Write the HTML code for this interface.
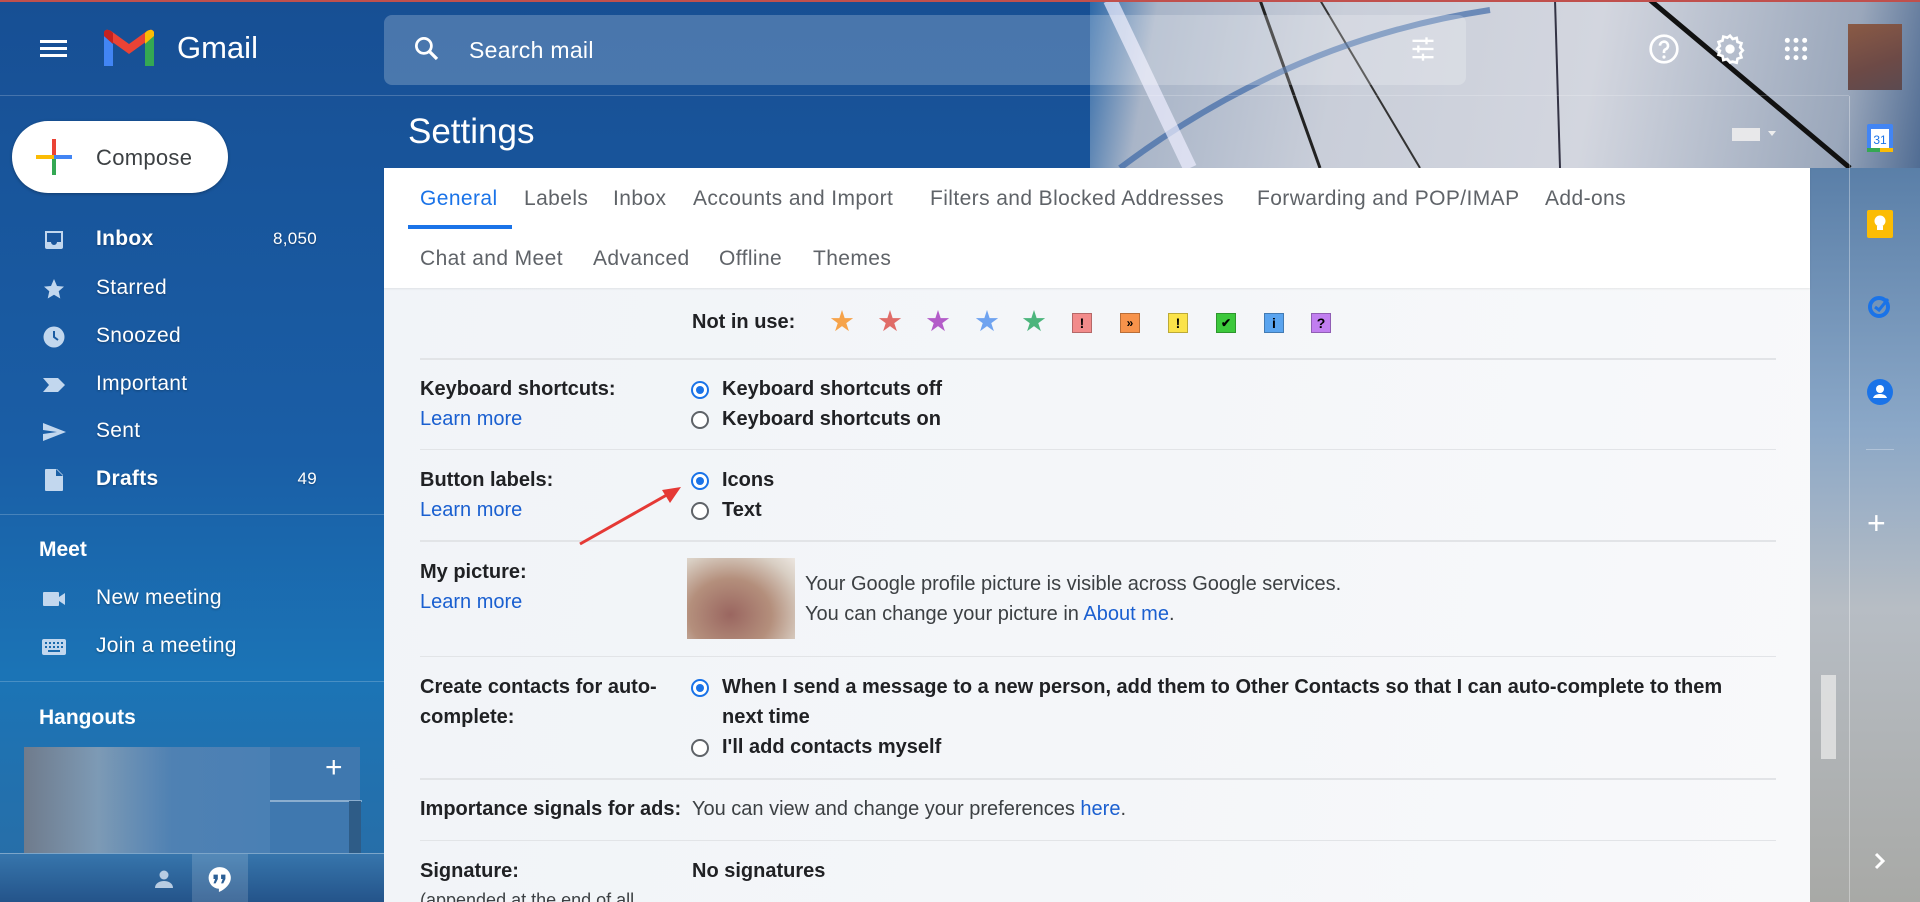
<!DOCTYPE html>
<html><head><meta charset="utf-8"><style>
*{margin:0;padding:0;box-sizing:border-box}
html,body{width:1920px;height:902px;overflow:hidden}
body{position:relative;font-family:"Liberation Sans",Arial,sans-serif;background:#1a5aa0}
.abs{position:absolute}
#bg{left:0;top:0;width:1920px;height:902px;background:linear-gradient(180deg,#174f94 0%,#1a5ea6 50%,#1b74b6 75%,#2a6da5 100%)}
#photo{left:1090px;top:0;width:830px;height:168px;background:linear-gradient(100deg,#2d68a8 0%,#a9b5c8 8%,#c9ced9 30%,#d3d6df 60%,#9aa7bb 90%,#506c93 100%)}
#rside{left:1810px;top:168px;width:110px;height:734px;background:linear-gradient(180deg,#5a7fa8 0%,#8aa7c7 35%,#b7bdc4 60%,#a8a9a6 100%)}
.nav{left:0;width:384px;height:48px;color:#fff;font-size:21px;letter-spacing:.3px;text-shadow:0 1px 2px rgba(0,0,0,.3)}
.nav .ic{position:absolute;left:42px;top:12px;width:24px;height:24px}
.nav .t{position:absolute;left:96px;top:11px}
.nav .c{position:absolute;right:67px;top:13px;font-size:17px}
.tab{position:absolute;font-size:21px;letter-spacing:.4px;color:#5f6368}
.lbl{position:absolute;left:420px;font-size:20px;font-weight:bold;color:#202124}
.lnk{position:absolute;left:420px;font-size:20px;color:#1a5fd0}
.val{position:absolute;left:722px;font-size:20px;font-weight:bold;color:#202124}
.rad{position:absolute;left:691px;width:18px;height:18px;border-radius:50%;border:2px solid #5f6368;background:#fff}
.rad.on{border-color:#1a73e8}
.rad.on:after{content:"";position:absolute;left:3px;top:3px;width:8px;height:8px;border-radius:50%;background:#1a73e8}
.hr{position:absolute;left:420px;width:1356px;height:2px;background:#e2e4e7}
.txt{position:absolute;font-size:20px;color:#3c4043}
.box{position:absolute;top:313px;width:20px;height:20px;font-size:14px;font-weight:bold;text-align:center;line-height:18px;color:#000;border:1px solid rgba(0,0,0,.25)}
.star{position:absolute;top:308px;font-size:29px;line-height:29px}
</style></head><body>
<div id="bg" class="abs"></div>
<div id="photo" class="abs"></div>
<svg class="abs" style="left:1090px;top:0" width="830" height="168">
<line x1="170" y1="0" x2="230" y2="168" stroke="#222" stroke-width="3"/>
<line x1="560" y1="0" x2="760" y2="168" stroke="#111" stroke-width="5"/>
<line x1="230" y1="0" x2="330" y2="168" stroke="#333" stroke-width="2"/>
<path d="M30 168 Q200 40 400 10" stroke="#2a5aa0" stroke-width="6" fill="none" opacity=".6"/>
<line x1="465" y1="0" x2="470" y2="168" stroke="#334" stroke-width="2"/>
<line x1="20" y1="0" x2="100" y2="168" stroke="#eef" stroke-width="14" opacity=".7"/>
</svg>
<div id="rside" class="abs"></div>
<div class="abs" style="left:1849px;top:96px;width:1px;height:806px;background:rgba(255,255,255,.35)"></div>
<div class="abs" style="left:0;top:0;width:1920px;height:2px;background:#c0504d"></div>
<div class="abs" style="left:0;top:95px;width:1849px;height:1px;background:rgba(255,255,255,.2)"></div>

<svg class="abs" style="left:40px;top:39px" width="28" height="20"><rect y="1" width="27" height="3" fill="#fff"/><rect y="8" width="27" height="3" fill="#fff"/><rect y="15" width="27" height="3" fill="#fff"/></svg>
<svg class="abs" style="left:102px;top:28px" width="54" height="40" viewBox="0 0 54 40">
<path d="M2 8 V38 H11 V16 Z" fill="#4285f4"/><path d="M43 16 V38 H52 V8 Z" fill="#34a853"/>
<path d="M2 8 L27 26 L52 8 L52 4 Q50 0 45 3 L27 16 L9 3 Q4 0 2 4 Z" fill="#ea4335"/>
<path d="M43 16 L52 8 V4 Q50 0 45 3 L43 5Z" fill="#fbbc04"/><path d="M2 8 L11 16 V5 L9 3 Q4 0 2 4Z" fill="#c5221f"/>
</svg>
<div class="abs" style="left:177px;top:30px;font-size:31px;color:#fff">Gmail</div>
<div class="abs" style="left:384px;top:15px;width:1082px;height:70px;border-radius:8px;background:rgba(255,255,255,.22)"></div>
<svg class="abs" style="left:412px;top:34px" width="30" height="30" viewBox="0 0 24 24"><circle cx="9.5" cy="9.5" r="6" stroke="#fff" stroke-width="2.2" fill="none"/><line x1="14" y1="14" x2="20" y2="20" stroke="#fff" stroke-width="2.6"/></svg>
<div class="abs" style="left:469px;top:37px;font-size:23px;letter-spacing:.3px;color:#fff">Search mail</div>
<svg class="abs" style="left:1409px;top:35px" width="28" height="28" viewBox="0 0 24 24" fill="#fff"><rect x="3" y="4" width="18" height="2"/><rect x="3" y="11" width="18" height="2"/><rect x="3" y="18" width="18" height="2"/><rect x="14" y="2" width="2" height="6"/><rect x="7" y="9" width="2" height="6"/><rect x="11" y="16" width="2" height="6"/></svg>
<svg class="abs" style="left:1648px;top:33px" width="32" height="32" viewBox="0 0 24 24"><circle cx="12" cy="12" r="10" stroke="#fff" stroke-width="2" fill="none"/><path d="M9 9.5a3 3 0 1 1 4 2.8c-.8.4-1 1-1 1.7V15" stroke="#fff" stroke-width="2" fill="none"/><circle cx="12" cy="18" r="1.2" fill="#fff"/></svg>
<svg class="abs" style="left:1714px;top:33px" width="32" height="32" viewBox="0 0 24 24"><path d="M12 2l2 2.5 3-.8.6 3 3 1-1 3 2 2.3-2 2.3 1 3-3 1-.6 3-3-.8L12 22l-2-2.5-3 .8-.6-3-3-1 1-3L2.4 12l2-2.3-1-3 3-1 .6-3 3 .8z" stroke="#fff" stroke-width="2" fill="none"/><circle cx="12" cy="12" r="3.5" fill="#fff"/></svg>
<svg class="abs" style="left:1783px;top:36px" width="26" height="26" viewBox="0 0 24 24" fill="#fff"><circle cx="4" cy="4" r="2.3"/><circle cx="12" cy="4" r="2.3"/><circle cx="20" cy="4" r="2.3"/><circle cx="4" cy="12" r="2.3"/><circle cx="12" cy="12" r="2.3"/><circle cx="20" cy="12" r="2.3"/><circle cx="4" cy="20" r="2.3"/><circle cx="12" cy="20" r="2.3"/><circle cx="20" cy="20" r="2.3"/></svg>
<div class="abs" style="left:1848px;top:24px;width:54px;height:66px;background:linear-gradient(160deg,#8a5a45,#6d4a46 60%,#5b4a50)"></div>

<div class="abs" style="left:12px;top:121px;width:216px;height:72px;border-radius:36px;background:#fff;box-shadow:0 1px 3px rgba(0,0,0,.3)"></div>
<svg class="abs" style="left:36px;top:139px" width="36" height="36" viewBox="0 0 36 36"><rect x="16" y="0" width="4" height="18" fill="#ea4335"/><rect x="16" y="18" width="4" height="18" fill="#34a853"/><rect x="0" y="16" width="18" height="4" fill="#fbbc04"/><rect x="18" y="16" width="18" height="4" fill="#4285f4"/></svg>
<div class="abs" style="left:96px;top:145px;font-size:22px;letter-spacing:.3px;color:#3c4043">Compose</div>

<div class="abs nav" style="top:216px"><svg class="ic" viewBox="0 0 24 24"><path d="M3 3h18v16a2 2 0 0 1-2 2H5a2 2 0 0 1-2-2z" fill="#c2d7ee"/><path d="M5 5h14v9h-4a3 3 0 0 1-6 0H5z" fill="#1a569c"/></svg><span class="t" style="font-weight:bold">Inbox</span><span class="c">8,050</span></div>
<div class="abs nav" style="top:265px"><svg class="ic" viewBox="0 0 24 24"><path d="M12 2l3 7 7 .6-5.3 4.7 1.6 7.2L12 17.8 5.7 21.5l1.6-7.2L2 9.6 9 9z" fill="#c2d7ee"/></svg><span class="t">Starred</span></div>
<div class="abs nav" style="top:313px"><svg class="ic" viewBox="0 0 24 24"><circle cx="12" cy="12" r="10.5" fill="#c2d7ee"/><path d="M12 6v6l4 3" stroke="#1a5ba2" stroke-width="2" fill="none"/></svg><span class="t">Snoozed</span></div>
<div class="abs nav" style="top:361px"><svg class="ic" viewBox="0 0 24 24"><path d="M1 5h15l7 7-7 7H1l6-7z" fill="#c2d7ee"/></svg><span class="t">Important</span></div>
<div class="abs nav" style="top:408px"><svg class="ic" viewBox="0 0 24 24"><path d="M1 3l23 9L1 21v-7l14-2-14-2z" fill="#c2d7ee"/></svg><span class="t">Sent</span></div>
<div class="abs nav" style="top:456px"><svg class="ic" viewBox="0 0 24 24"><path d="M4 1h11l6 6v15a1 1 0 0 1-1 1H4a1 1 0 0 1-1-1V2a1 1 0 0 1 1-1z" fill="#c2d7ee"/><path d="M14 1v7h7" fill="#1a5fa5"/></svg><span class="t" style="font-weight:bold">Drafts</span><span class="c">49</span></div>
<div class="abs" style="left:0;top:514px;width:384px;height:1px;background:rgba(255,255,255,.2)"></div>
<div class="abs" style="left:39px;top:538px;font-size:21px;font-weight:bold;color:#fff">Meet</div>
<div class="abs nav" style="top:575px"><svg class="ic" viewBox="0 0 24 24"><rect x="1" y="5" width="16" height="14" rx="1" fill="#c2d7ee"/><path d="M17 10l6-4v12l-6-4z" fill="#c2d7ee"/></svg><span class="t">New meeting</span></div>
<div class="abs nav" style="top:623px"><svg class="ic" viewBox="0 0 24 24"><rect x="0" y="4" width="24" height="16" rx="2" fill="#c2d7ee"/><g fill="#1a6aad"><rect x="3" y="7" width="2" height="2"/><rect x="7" y="7" width="2" height="2"/><rect x="11" y="7" width="2" height="2"/><rect x="15" y="7" width="2" height="2"/><rect x="19" y="7" width="2" height="2"/><rect x="3" y="11" width="2" height="2"/><rect x="7" y="11" width="2" height="2"/><rect x="11" y="11" width="2" height="2"/><rect x="15" y="11" width="2" height="2"/><rect x="19" y="11" width="2" height="2"/><rect x="6" y="15" width="12" height="2"/></g></svg><span class="t">Join a meeting</span></div>
<div class="abs" style="left:0;top:681px;width:384px;height:1px;background:rgba(255,255,255,.2)"></div>
<div class="abs" style="left:39px;top:706px;font-size:21px;font-weight:bold;color:#fff">Hangouts</div>
<div class="abs" style="left:24px;top:747px;width:246px;height:106px;background:linear-gradient(90deg,#6f7b8c,#7d9ab5 30%,#4f81b3 60%,#4a80b4)"></div>
<div class="abs" style="left:270px;top:747px;width:90px;height:106px;background:#3f78af"></div>
<div class="abs" style="left:270px;top:800px;width:92px;height:2px;background:rgba(255,255,255,.4)"></div>
<div class="abs" style="left:349px;top:801px;width:12px;height:52px;background:#2e5c87"></div>
<div class="abs" style="left:325px;top:751px;font-size:30px;color:#fff">+</div>
<div class="abs" style="left:0;top:853px;width:384px;height:49px;background:linear-gradient(180deg,#3776ad,#24548a)"></div>
<div class="abs" style="left:0;top:853px;width:384px;height:1px;background:rgba(255,255,255,.35)"></div>
<div class="abs" style="left:192px;top:854px;width:56px;height:48px;background:rgba(255,255,255,.15)"></div>
<svg class="abs" style="left:152px;top:867px" width="24" height="24" viewBox="0 0 24 24" fill="#b8cce2"><circle cx="12" cy="8" r="4.5"/><path d="M3 21c0-5 5-7 9-7s9 2 9 7z"/></svg>
<svg class="abs" style="left:207px;top:866px" width="26" height="26" viewBox="0 0 24 24"><path d="M12 1a10 10 0 0 0-1 20v3c5-2 11-7 11-13A10 10 0 0 0 12 1z" fill="#fff"/><path d="M6 8h4v4l-2 4H6l1.5-4H6zM13 8h4v4l-2 4h-2l1.5-4H13z" fill="#2b5f96"/></svg>

<div class="abs" style="left:408px;top:112px;font-size:35px;color:#fff">Settings</div>
<svg class="abs" style="left:1730px;top:126px" width="50" height="16"><rect x="2" y="2" width="28" height="13" fill="#e8e8ea"/><path d="M38 5h8l-4 5z" fill="#eee"/></svg>
<div class="abs" style="left:384px;top:168px;width:1426px;height:734px;background:linear-gradient(100deg,#f1f4f8 0%,#f4f6f9 50%,#f8f9fa 100%)"></div>
<div class="abs" style="left:384px;top:168px;width:1426px;height:120px;background:#fff;box-shadow:0 1px 2px rgba(0,0,0,.08)"></div>
<div class="tab" style="left:420px;top:187px;color:#1a73e8">General</div>
<div class="abs" style="left:408px;top:225px;width:104px;height:4px;background:#1a73e8"></div>
<div class="tab" style="left:524px;top:187px">Labels</div>
<div class="tab" style="left:613px;top:187px">Inbox</div>
<div class="tab" style="left:693px;top:187px">Accounts and Import</div>
<div class="tab" style="left:930px;top:187px">Filters and Blocked Addresses</div>
<div class="tab" style="left:1257px;top:187px">Forwarding and POP/IMAP</div>
<div class="tab" style="left:1545px;top:187px">Add-ons</div>
<div class="tab" style="left:420px;top:247px">Chat and Meet</div>
<div class="tab" style="left:593px;top:247px">Advanced</div>
<div class="tab" style="left:719px;top:247px">Offline</div>
<div class="tab" style="left:813px;top:247px">Themes</div>

<div class="lbl" style="left:692px;top:311px">Not in use:</div>
<span class="star" style="left:829px;color:#f6a34a">★</span>
<span class="star" style="left:877px;color:#e06c68">★</span>
<span class="star" style="left:925px;color:#b35cc9">★</span>
<span class="star" style="left:974px;color:#6fa3f0">★</span>
<span class="star" style="left:1021px;color:#4bb57c">★</span>
<div class="box" style="left:1072px;background:#f28b8b">!</div>
<div class="box" style="left:1120px;background:#f7934b;font-size:12px">»</div>
<div class="box" style="left:1168px;background:#fbe34a">!</div>
<div class="box" style="left:1216px;background:#3cc83c;font-size:12px">✔</div>
<div class="box" style="left:1264px;background:#5aa4ef">i</div>
<div class="box" style="left:1311px;background:#c17ef0">?</div>
<div class="hr" style="top:358px"></div>

<div class="lbl" style="top:378px">Keyboard shortcuts:</div>
<div class="lnk" style="top:408px">Learn more</div>
<div class="rad on" style="top:381px"></div><div class="val" style="top:378px">Keyboard shortcuts off</div>
<div class="rad" style="top:411px"></div><div class="val" style="top:408px">Keyboard shortcuts on</div>
<div class="hr" style="top:449px;height:1px"></div>

<div class="lbl" style="top:469px">Button labels:</div>
<div class="lnk" style="top:499px">Learn more</div>
<div class="rad on" style="top:472px"></div><div class="val" style="top:469px">Icons</div>
<div class="rad" style="top:502px"></div><div class="val" style="top:499px">Text</div>
<div class="hr" style="top:540px"></div>
<svg class="abs" style="left:570px;top:480px" width="120" height="70"><line x1="10" y1="64" x2="102" y2="12" stroke="#e53935" stroke-width="3"/><path d="M111 7 L92 10 L100 23 Z" fill="#e53935"/></svg>

<div class="lbl" style="top:561px">My picture:</div>
<div class="lnk" style="top:591px">Learn more</div>
<div class="abs" style="left:687px;top:558px;width:108px;height:81px;background:radial-gradient(ellipse at 40% 70%,#9a6660,#b48f7c 45%,#d9cfc4 80%,#ece6e0)"></div>
<div class="txt" style="left:805px;top:573px">Your Google profile picture is visible across Google services.</div>
<div class="txt" style="left:805px;top:603px">You can change your picture in <span style="color:#1a5fd0">About me</span>.</div>
<div class="hr" style="top:656px;height:1px"></div>

<div class="lbl" style="top:676px">Create contacts for auto-</div>
<div class="lbl" style="top:706px">complete:</div>
<div class="rad on" style="top:679px"></div><div class="val" style="top:676px">When I send a message to a new person, add them to Other Contacts so that I can auto-complete to them</div>
<div class="val" style="top:706px">next time</div>
<div class="rad" style="top:739px"></div><div class="val" style="top:736px">I'll add contacts myself</div>
<div class="hr" style="top:778px"></div>

<div class="lbl" style="top:798px">Importance signals for ads:</div>
<div class="txt" style="left:692px;top:798px">You can view and change your preferences <span style="color:#1a5fd0">here</span>.</div>
<div class="hr" style="top:840px;height:1px"></div>

<div class="lbl" style="top:860px">Signature:</div>
<div class="txt" style="left:420px;top:890px;font-size:18px">(appended at the end of all</div>
<div class="val" style="left:692px;top:860px">No signatures</div>

<div class="abs" style="left:1821px;top:675px;width:15px;height:84px;background:rgba(230,230,230,.8)"></div>

<svg class="abs" style="left:1866px;top:123px" width="28" height="30" viewBox="0 0 28 30"><rect x="1" y="1" width="26" height="28" rx="2" fill="#4285f4"/><rect x="5" y="6" width="18" height="19" fill="#fff"/><text x="14" y="21" font-size="12" text-anchor="middle" fill="#1a73e8" font-family="Liberation Sans">31</text><rect x="1" y="25" width="13" height="4" fill="#34a853"/><rect x="14" y="25" width="13" height="4" fill="#fbbc04"/></svg>
<svg class="abs" style="left:1866px;top:209px" width="28" height="30" viewBox="0 0 28 30"><rect x="1" y="1" width="26" height="28" rx="2" fill="#fbbc04"/><circle cx="14" cy="12" r="5.5" fill="#fff"/><rect x="11" y="17" width="6" height="4" fill="#fff"/></svg>
<svg class="abs" style="left:1866px;top:292px" width="28" height="28" viewBox="0 0 28 28"><circle cx="13" cy="15" r="9" stroke="#1a73e8" stroke-width="4" fill="none"/><path d="M9 15l4 3 9-11" stroke="#1a73e8" stroke-width="3" fill="none"/></svg>
<svg class="abs" style="left:1866px;top:378px" width="28" height="28" viewBox="0 0 28 28"><circle cx="14" cy="14" r="13" fill="#1a73e8"/><circle cx="14" cy="11" r="4" fill="#fff"/><path d="M7 20c1-3 4-4 7-4s6 1 7 4z" fill="#fff"/></svg>
<div class="abs" style="left:1866px;top:449px;width:28px;height:1px;background:rgba(255,255,255,.3)"></div>
<div class="abs" style="left:1867px;top:505px;font-size:32px;color:#fff">+</div>
<svg class="abs" style="left:1870px;top:850px" width="20" height="22" viewBox="0 0 20 22"><path d="M6 4l7 7-7 7" stroke="#fff" stroke-width="3" fill="none"/></svg>
</body></html>
